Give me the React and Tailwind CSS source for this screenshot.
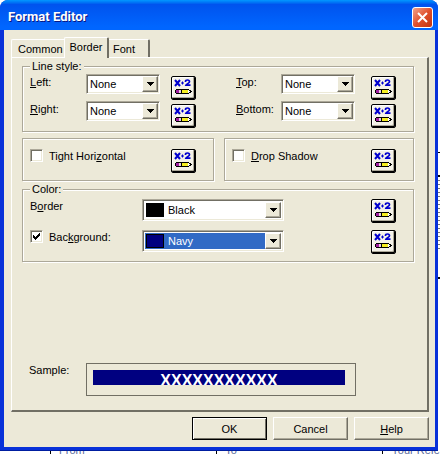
import { useState } from 'react';

const ETCHED = 'border border-[#aca899] shadow-[1px_1px_0_#fff,inset_1px_1px_0_#fff]';
const RAISED = 'bg-[#ece9d8] border border-t-white border-l-white border-r-[#716f64] border-b-[#716f64] shadow-[inset_-1px_-1px_0_#aca899]';
const SUNKEN = 'border border-t-[#aca899] border-l-[#aca899] border-r-white border-b-white shadow-[inset_1px_1px_0_#716f64,inset_-1px_-1px_0_#ece9d8]';

function FormulaButton({ label }) {
    return (
        <button
            type="button"
            aria-label={label}
            className="w-[25px] h-6 shrink-0 rounded-[2px] border border-black bg-[#f4f2e8] shadow-[inset_-1px_-1px_0_#000,inset_-2px_-2px_0_#aca899,inset_1px_1px_0_#fff] flex items-start justify-center"
        >
            <svg width="23" height="22" viewBox="0 0 23 22">
                {/* x + 2 */}
                <g fill="none" stroke="#0000d0" strokeWidth="2">
                    <path d="M3 3l5 6M8 3l-5 6" />
                    <path d="M9 6h3M10.500 4.500v3" strokeWidth="1" />
                    <path d="M13.500 5V4.500Q13.500 3 15.500 3T17.500 4.800C17.500 6 14.500 7 14 8.200H18.500" strokeWidth="1.700" />
                </g>
                {/* pencil */}
                <g shapeRendering="crispEdges">
                    <path d="M4 12h13v1h2v1h1v1h-1v1h-2v1H4v-1H3v-3h1z" fill="#000" />
                    <path d="M4 13h3v3H4z" fill="#a020a0" />
                    <path d="M7 13h2v3H7z" fill="#e8d0e0" />
                    <path d="M10 13h6v3h-6z" fill="#f5ee20" />
                    <path d="M16 13h1v1h1v1h-1v1h-1z" fill="#fff" />
                </g>
            </svg>
        </button>
    );
}

function ArrowBox() {
    return (
        <span className={`absolute right-[2px] inset-y-[2px] w-4 flex items-center justify-center pointer-events-none ${RAISED}`}>
            <svg width="7" height="4" viewBox="0 0 7 4" shapeRendering="crispEdges">
                <path d="M0 0h7v1H6v1H5v1H4v1H3V3H2V2H1V1H0z" />
            </svg>
        </span>
    );
}

function LineSelect({ id }) {
    return (
        <div className="relative w-[74px]">
            <select id={id} className={`block w-full h-5 pl-[3px] appearance-none bg-white outline-none ${SUNKEN}`}>
                <option>None</option>
                <option>Single</option>
                <option>Double</option>
                <option>Dashed</option>
                <option>Dotted</option>
            </select>
            <ArrowBox />
        </div>
    );
}

const COLORS = { Black: '#000000', Navy: '#000080', Maroon: '#800000', Green: '#008000' };

function ColorSelect({ id, label, initial, active }) {
    const [value, setValue] = useState(initial);
    return (
        <div className={`relative w-[142px] p-[2px] bg-white ${SUNKEN}`}>
            <select
                id={id}
                aria-label={label}
                value={value}
                onChange={(e) => setValue(e.target.value)}
                className={`block w-full h-4 pl-[23px] appearance-none outline-none ${active ? 'bg-[#316ac5] text-white' : 'bg-white'}`}
            >
                {Object.keys(COLORS).map((name) => <option key={name} className="bg-white text-black">{name}</option>)}
            </select>
            <span
                className="absolute left-[3px] top-[3px] w-[18px] h-[14px] border border-black pointer-events-none"
                style={{ backgroundColor: COLORS[value] }}
            />
            <ArrowBox />
        </div>
    );
}

function CheckBox({ id, defaultChecked }) {
    return (
        <span className="relative w-[13px] h-[13px] shrink-0">
            <input
                id={id}
                type="checkbox"
                defaultChecked={defaultChecked}
                className={`peer block w-full h-full appearance-none bg-white ${SUNKEN}`}
            />
            <svg className="absolute left-[3px] top-[3px] hidden peer-checked:block pointer-events-none" width="7" height="7" viewBox="0 0 7 7" shapeRendering="crispEdges">
                <path d="M0 2h1v1h1v1h1V3h1V2h1V1h1V0h1v3H6v1H5v1H4v1H3v1H2V6H1V5H0z" />
            </svg>
        </span>
    );
}

function LineGroup({ first, second, className }) {
    return (
        <div className={`flex ${className}`}>
            <div className="flex-1 flex flex-col gap-[15px] pt-[2px]">
                <label htmlFor={first} className="leading-3"><u>{first[0]}</u>{first.slice(1)}:</label>
                <label htmlFor={second} className="leading-3"><u>{second[0]}</u>{second.slice(1)}:</label>
            </div>
            <div className="flex flex-col gap-[7px]">
                <LineSelect id={first} />
                <LineSelect id={second} />
            </div>
            <div className="flex flex-col gap-1 pt-[2px] ml-[11px]">
                <FormulaButton label={`${first} formula`} />
                <FormulaButton label={`${second} formula`} />
            </div>
        </div>
    );
}

export default function App() {
    return (
        <div className="h-screen bg-white overflow-hidden flex flex-col text-[11px] leading-3 text-black font-['Liberation_Sans',sans-serif]">
            <div className="flex">
                <div className="flex-1 rounded-t-lg bg-[#0831d9] border-b border-[#001ea0] pb-[3px] pl-1 pr-[3px]">
                    <header className="-ml-1 -mr-[3px] h-[30px] rounded-t-lg pl-2 pr-[5px] flex items-center justify-between bg-linear-to-b from-[#0997ff] from-0% via-[#0053ee] via-15% to-[#0066ff] to-90%">
                        <h1 className="pt-1 text-[13px] leading-4 font-bold text-white [text-shadow:1px_1px_0_#0a1883] font-['Roboto',sans-serif]">Format Editor</h1>
                        <button type="button" aria-label="Close" className="mt-1 w-[21px] h-[21px] rounded-[3px] border border-white bg-linear-to-br from-[#f0a088] via-[#e0502c] to-[#c03410] flex items-center justify-center">
                            <svg width="13" height="13" viewBox="0 0 13 13" stroke="#fff" strokeWidth="2">
                                <path d="M2 2l9 9M11 2l-9 9" />
                            </svg>
                        </button>
                    </header>

                    <main className="bg-[#ece9d8] pt-[7px] pl-[7px] pr-[6px] pb-[7px]">
                        <div role="tablist" className="flex items-end h-5">
                            <button type="button" role="tab" aria-selected="false" className="h-[18px] w-[53px] pl-[6px] text-left border-t border-l border-white rounded-tl-[2px]">Common</button>
                            <button type="button" role="tab" aria-selected="true" className="relative h-[21px] -mb-px w-[45px] pb-[3px] border-t border-l border-t-white border-l-white border-r-2 border-r-[#716f64] bg-[#ece9d8] rounded-t-[2px]">Border</button>
                            <button type="button" role="tab" aria-selected="false" className="h-[18px] w-[41px] pl-1 text-left border-t border-t-white border-r-2 border-r-[#716f64] rounded-tr-[2px]">Font</button>
                        </div>

                        <div className="border-t border-l border-t-white border-l-white border-r-2 border-b-2 border-r-[#716f64] border-b-[#716f64] pt-[2px] pl-[10px] pr-[13px] pb-[14px]">
                            <fieldset className={`h-[72px] ${ETCHED}`}>
                                <legend className="ml-[7px] px-[2px] bg-[#ece9d8]">Line style:</legend>
                                <div className="flex pl-[7px] pr-[17px] pt-[2px]">
                                    <LineGroup first="Left" second="Right" className="w-[166px]" />
                                    <LineGroup first="Top" second="Bottom" className="ml-auto w-[160px] [&>div:last-child]:ml-4" />
                                </div>
                            </fieldset>

                            <div className="mt-[6px] flex gap-[10px]">
                                <div className={`w-[192px] h-[43px] pt-[10px] pl-[7px] pr-[17px] flex justify-between items-start ${ETCHED}`}>
                                    <div className="flex gap-[6px] leading-[14px]">
                                        <CheckBox id="tight" />
                                        <label htmlFor="tight">Tight Hori<u>z</u>ontal</label>
                                    </div>
                                    <FormulaButton label="Tight horizontal formula" />
                                </div>
                                <div className={`flex-1 h-[43px] pt-[10px] pl-[7px] pr-[17px] flex justify-between items-start ${ETCHED}`}>
                                    <div className="flex gap-[6px] leading-[14px]">
                                        <CheckBox id="shadow" />
                                        <label htmlFor="shadow"><u>D</u>rop Shadow</label>
                                    </div>
                                    <FormulaButton label="Drop shadow formula" />
                                </div>
                            </div>

                            <fieldset className={`mt-[2px] h-[79px] ${ETCHED}`}>
                                <legend className="ml-[7px] px-[2px] bg-[#ece9d8]">Color:</legend>
                                <div className="flex flex-col gap-[7px] pl-[7px] pr-[17px] pt-1 leading-[14px]">
                                    <div className="flex items-start h-6">
                                        <label htmlFor="border-color" className="w-28">B<u>o</u>rder</label>
                                        <ColorSelect id="border-color" initial="Black" />
                                        <div className="ml-auto"><FormulaButton label="Border color formula" /></div>
                                    </div>
                                    <div className="flex items-start h-6">
                                        <div className="w-28 flex gap-[6px]">
                                            <CheckBox id="background" defaultChecked />
                                            <label htmlFor="background">Bac<u>k</u>ground:</label>
                                        </div>
                                        <ColorSelect id="background-color" label="Background color" initial="Navy" active />
                                        <div className="ml-auto"><FormulaButton label="Background formula" /></div>
                                    </div>
                                </div>
                            </fieldset>

                            <div className="mt-[101px] pl-[7px] flex">
                                <span className="w-[57px] leading-[14px]">Sample:</span>
                                <div className="w-[270px] h-[33px] border border-[#716f64] pt-[6px] pl-[6px] pr-[10px]">
                                    <div className="h-[15px] overflow-hidden bg-[#000080] text-white text-center text-[16px] leading-[22px] font-bold">XXXXXXXXXXX</div>
                                </div>
                            </div>
                        </div>

                        <footer className="mt-[5px] flex justify-end gap-[6px]">
                            <button type="button" className="w-[75px] h-[23px] border border-black bg-[#ece9d8] shadow-[inset_1px_1px_0_#fff,inset_-1px_-1px_0_#716f64]">OK</button>
                            <button type="button" className={`w-[75px] h-[23px] ${RAISED}`}>Cancel</button>
                            <button type="button" className={`w-[75px] h-[23px] ${RAISED}`}><u>H</u>elp</button>
                        </footer>
                    </main>
                </div>

                {/* sliver of the report page behind the dialog */}
                <div className="w-[2px] flex flex-col">
                    <div className="h-[153px] border-b border-black" />
                    <div className="h-6 border-b-2 border-black" />
                    <div className="h-[72px] bg-[repeating-linear-gradient(to_bottom,#fff_0_3px,#777_3px_4px)]" />
                    <div className="h-[30px] border-b-2 border-black" />
                </div>
            </div>

            <div className="flex-1 overflow-hidden flex pl-[50px] text-[#5a6a9a]">
                <div className="w-[168px] pl-2 border-l border-black"><span className="block -mt-[7px]">From</span></div>
                <div className="w-[168px] pl-2 border-l border-black"><span className="block -mt-[7px]">To</span></div>
                <div className="pl-2 border-l border-black whitespace-nowrap"><span className="block -mt-[7px]">Your Refe</span></div>
            </div>
        </div>
    );
}
